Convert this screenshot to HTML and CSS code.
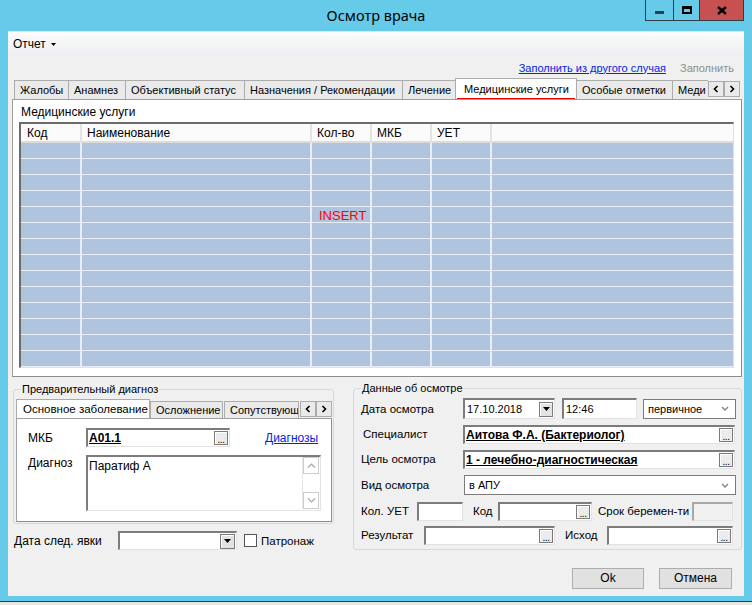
FILE: index.html
```html
<!DOCTYPE html>
<html lang="ru">
<head>
<meta charset="utf-8">
<title>Осмотр врача</title>
<link rel="stylesheet" href="styles.css">
</head>
<body>
<div class="window">
  <div class="titlebar">
    <div class="spacer"></div>
    <div class="title">Осмотр врача</div>
    <div class="caption">
      <div class="cbtn cmin"><span class="min-bar"></span></div>
      <div class="cbtn cmax"><span class="max-box"></span></div>
      <div class="cbtn cclose">
        <svg width="10" height="9" viewBox="0 0 10 9"><path d="M1 1 L9 8 M9 1 L1 8" stroke="#000" stroke-width="2.4" fill="none"/></svg>
      </div>
    </div>
  </div>

  <div class="client">
    <div class="menubar">
      <span class="menu-item">Отчет</span>
      <svg class="caret" width="5" height="3" viewBox="0 0 5 3"><path d="M0 0 H5 L2.5 3 Z" fill="#000"/></svg>
    </div>

    <div class="toolbar">
      <span class="link">Заполнить из другого случая</span>
      <span class="disabled">Заполнить</span>
    </div>

    <div class="tabstrip main-strip">
      <div class="tabs">
        <div class="tab t-zhal">Жалобы</div>
        <div class="tab t-anam">Анамнез</div>
        <div class="tab t-obj">Объективный статус</div>
        <div class="tab t-nazn">Назначения / Рекомендации</div>
        <div class="tab t-lech">Лечение</div>
        <div class="tab selected t-med">Медицинские услуги</div>
        <div class="tab t-osob">Особые отметки</div>
        <div class="tab t-medi">Меди</div>
      </div>
      <div class="sbtn"><svg width="6" height="8" viewBox="0 0 6 8"><polyline points="4.5,1 1.5,4 4.5,7" fill="none" stroke="#000" stroke-width="1.6"/></svg></div>
      <div class="sbtn"><svg width="6" height="8" viewBox="0 0 6 8"><polyline points="1.5,1 4.5,4 1.5,7" fill="none" stroke="#000" stroke-width="1.6"/></svg></div>
    </div>

    <div class="panel main-panel">
      <div class="panel-label">Медицинские услуги</div>
      <div class="grid">
        <table>
          <thead>
            <tr><th>Код</th><th>Наименование</th><th>Кол-во</th><th>МКБ</th><th>УЕТ</th><th></th></tr>
          </thead>
          <tbody>
            <tr><td></td><td></td><td></td><td></td><td></td><td></td></tr>
            <tr><td></td><td></td><td></td><td></td><td></td><td></td></tr>
            <tr><td></td><td></td><td></td><td></td><td></td><td></td></tr>
            <tr><td></td><td></td><td></td><td></td><td></td><td></td></tr>
            <tr><td></td><td></td><td></td><td></td><td></td><td></td></tr>
            <tr><td></td><td></td><td></td><td></td><td></td><td></td></tr>
            <tr><td></td><td></td><td></td><td></td><td></td><td></td></tr>
            <tr><td></td><td></td><td></td><td></td><td></td><td></td></tr>
            <tr><td></td><td></td><td></td><td></td><td></td><td></td></tr>
            <tr><td></td><td></td><td></td><td></td><td></td><td></td></tr>
            <tr><td></td><td></td><td></td><td></td><td></td><td></td></tr>
            <tr><td></td><td></td><td></td><td></td><td></td><td></td></tr>
            <tr><td></td><td></td><td></td><td></td><td></td><td></td></tr>
            <tr><td></td><td></td><td></td><td></td><td></td><td></td></tr>
          </tbody>
        </table>
        <div class="insert">INSERT</div>
      </div>
    </div>

    <div class="bottom">
      <div class="left-col">
        <fieldset class="group group-left">
          <legend>Предварительный диагноз</legend>
          <div class="tabstrip inner-strip">
            <div class="tabs">
              <div class="itab selected it-main">Основное заболевание</div>
              <div class="itab it-osl">Осложнение</div>
              <div class="itab it-sop">Сопутствующ</div>
            </div>
            <div class="sbtn isbtn"><svg width="6" height="8" viewBox="0 0 6 8"><polyline points="4.5,1 1.5,4 4.5,7" fill="none" stroke="#000" stroke-width="1.6"/></svg></div>
            <div class="sbtn isbtn"><svg width="6" height="8" viewBox="0 0 6 8"><polyline points="1.5,1 4.5,4 1.5,7" fill="none" stroke="#000" stroke-width="1.6"/></svg></div>
          </div>
          <div class="panel inner-panel">
            <div class="irow">
              <span class="ilabel">МКБ</span>
              <div class="field mkb">
                <span class="bold-val">A01.1</span>
                <span class="dots">...</span>
              </div>
              <span class="link diag-link">Диагнозы</span>
            </div>
            <div class="irow drow">
              <span class="ilabel dlabel">Диагноз</span>
              <div class="memo">
                <span class="memo-text">Паратиф А</span>
                <div class="vscroll">
                  <div class="varrow"><svg width="9" height="5" viewBox="0 0 9 5"><polyline points="1,4.5 4.5,1 8,4.5" fill="none" stroke="#a6a6a6" stroke-width="1.2"/></svg></div>
                  <div class="vtrack"></div>
                  <div class="varrow"><svg width="9" height="5" viewBox="0 0 9 5"><polyline points="1,0.5 4.5,4 8,0.5" fill="none" stroke="#a6a6a6" stroke-width="1.2"/></svg></div>
                </div>
              </div>
            </div>
          </div>
        </fieldset>
        <div class="date-row">
          <span class="date-label">Дата след. явки</span>
          <div class="field next-date">
            <span class="ddbtn"><svg width="7" height="4" viewBox="0 0 7 4"><path d="M0 0 H7 L3.5 4 Z" fill="#000"/></svg></span>
          </div>
          <span class="checkbox"></span>
          <span class="check-label">Патронаж</span>
        </div>
      </div>

      <div class="right-col">
        <fieldset class="group group-right">
          <legend>Данные об осмотре</legend>
          <div class="rrow r1">
            <span class="rlabel">Дата осмотра</span>
            <div class="field f-date"><span class="val">17.10.2018</span><span class="ddbtn small"><svg width="7" height="4" viewBox="0 0 7 4"><path d="M0 0 H7 L3.5 4 Z" fill="#000"/></svg></span></div>
            <div class="field f-time"><span class="val">12:46</span></div>
            <div class="combo f-kind"><span class="val">первичное</span><svg width="8" height="5" viewBox="0 0 8 5"><polyline points="1,1 4,4 7,1" fill="none" stroke="#8a8a8a" stroke-width="1.5"/></svg></div>
          </div>
          <div class="rrow r2">
            <span class="rlabel indent">Специалист</span>
            <div class="field f-wide"><span class="bold-val">Аитова Ф.А. (Бактериолог)</span><span class="dots">...</span></div>
          </div>
          <div class="rrow r3">
            <span class="rlabel">Цель осмотра</span>
            <div class="field f-wide"><span class="bold-val">1 - лечебно-диагностическая</span><span class="dots">...</span></div>
          </div>
          <div class="rrow r4">
            <span class="rlabel">Вид осмотра</span>
            <div class="combo f-wide"><span class="val">в АПУ</span><svg width="8" height="5" viewBox="0 0 8 5"><polyline points="1,1 4,4 7,1" fill="none" stroke="#8a8a8a" stroke-width="1.5"/></svg></div>
          </div>
          <div class="rrow r5">
            <span class="rlabel l-uet">Кол. УЕТ</span>
            <div class="field f-uet"></div>
            <span class="rlabel l-kod">Код</span>
            <div class="field f-kod"><span class="dots">...</span></div>
            <span class="rlabel l-srok">Срок беремен-ти</span>
            <div class="field f-srok disabled-field"></div>
          </div>
          <div class="rrow r6">
            <span class="rlabel l-res">Результат</span>
            <div class="field f-res"><span class="dots">...</span></div>
            <span class="rlabel l-ish">Исход</span>
            <div class="field f-ish"><span class="dots">...</span></div>
          </div>
        </fieldset>
        <div class="buttons">
          <div class="btn btn-ok">Ok</div>
          <div class="btn btn-cancel">Отмена</div>
        </div>
      </div>
    </div>
  </div>
</div>
</body>
</html>
```
FILE: styles.css
```css
* { box-sizing: border-box; }

body {
  margin: 0;
  background: #e6e6e6;
  font-family: "Liberation Sans", Arial, sans-serif;
  font-size: 12px;
  color: #000;
}

.window {
  width: 752px;
  height: 602px;
  background: #66cbe9;
  border-bottom: 1px solid #2d3a40;
  display: flex;
  flex-direction: column;
}

/* title bar */
.titlebar {
  height: 31px;
  flex: none;
  display: grid;
  grid-template-columns: 1fr auto 1fr;
}
.title {
  font-family: "Noto Sans", "Open Sans", sans-serif;
  font-size: 14.5px;
  line-height: 31px;
}
.caption {
  justify-self: end;
  align-self: start;
  display: flex;
  margin-right: 8px;
  height: 21px;
}
.cbtn {
  height: 21px;
  border: 1px solid #2e3d45;
  border-top: none;
  display: flex;
  align-items: center;
  justify-content: center;
}
.cmin { width: 29px; }
.cmax { width: 27px; margin-left: -1px; }
.cclose { width: 45px; margin-left: -1px; background: #c75050; }
.min-bar {
  width: 9px;
  height: 3px;
  background: #2b4052;
  margin-top: 5px;
}
.max-box {
  width: 10px;
  height: 8px;
  border: 2px solid #000;
  border-top-width: 3px;
}

/* client */
.client {
  margin: 0 8px;
  height: 565px;
  flex: none;
  background: #f0f0f0;
  display: flex;
  flex-direction: column;
}

.menubar {
  height: 24px;
  flex: none;
  display: flex;
  align-items: center;
  padding-left: 5px;
  background: linear-gradient(#fcfcfc, #eceef1);
  border-top: 1px solid #dfe6ea;
}
.menu-item { margin-right: 5px; }
.caret { margin-top: 1px; }

.toolbar {
  height: 23px;
  flex: none;
  display: flex;
  justify-content: flex-end;
  align-items: center;
  gap: 14px;
  padding-right: 10px;
  padding-top: 2px;
  font-size: 11px;
}
.link {
  color: #0026e8;
  text-decoration: underline;
}
.disabled { color: #8d8d8d; }

/* tabs */
.tabstrip {
  display: flex;
  align-items: flex-end;
  flex: none;
}
.tabs {
  flex: 1;
  display: flex;
  align-items: flex-end;
  overflow: hidden;
  height: 100%;
}
.main-strip {
  height: 21px;
  margin-left: 6px;
  width: 726px;
}
.tab {
  flex: none;
  height: 19px;
  margin-right: -1px;
  border: 1px solid #acacac;
  border-bottom: none;
  background: #eaeaea;
  padding-left: 5px;
  font-size: 11px;
  line-height: 18px;
  white-space: nowrap;
  overflow: hidden;
}
.tab.selected {
  position: relative;
  z-index: 2;
  height: 23px;
  margin-bottom: -2px;
  background: #fff;
  padding-left: 8px;
  line-height: 20px;
  overflow: visible;
}
.tab.selected::after {
  content: "";
  position: absolute;
  left: 1px;
  right: 1px;
  bottom: 0;
  height: 3px;
  background: #f00000;
}
.t-zhal { width: 55px; }
.t-anam { width: 58px; }
.t-obj { width: 120px; }
.t-nazn { width: 159px; }
.t-lech { width: 54px; }
.t-med { width: 122px; }
.t-osob { width: 97px; }
.t-medi { width: 40px; }

.sbtn {
  flex: none;
  align-self: flex-start;
  margin-top: 3px;
  width: 16px;
  height: 16px;
  border: 1px solid #acacac;
  background: #eaeaea;
  display: flex;
  align-items: center;
  justify-content: center;
}

.panel {
  background: #fff;
  border: 1px solid #a0a0a0;
  border-right-color: #8c8c8c;
  border-bottom-color: #8c8c8c;
}
.main-panel {
  margin-left: 4px;
  width: 730px;
  height: 278px;
  padding: 5px 0 0 6px;
  flex: none;
}
.panel-label {
  margin-left: 2px;
  line-height: 14px;
  margin-bottom: 3px;
  font-size: 12px;
}

/* grid */
.grid {
  position: relative;
  width: 715px;
  height: 246px;
  border-top: 2px solid #6b6b6b;
  border-left: 2px solid #6b6b6b;
  border-right: 1px solid #e0e0e0;
  border-bottom: 1px solid #e0e0e0;
  background: #fff;
}
.grid table {
  border-collapse: separate;
  border-spacing: 0;
  width: 712px;
  table-layout: fixed;
}
.grid th:nth-child(1), .grid td:nth-child(1) { width: 61px; }
.grid th:nth-child(2), .grid td:nth-child(2) { width: 230px; }
.grid th:nth-child(3), .grid td:nth-child(3) { width: 60px; }
.grid th:nth-child(4), .grid td:nth-child(4) { width: 60px; }
.grid th:nth-child(5), .grid td:nth-child(5) { width: 60px; }
.grid th {
  height: 19px;
  padding: 0 0 0 5px;
  text-align: left;
  font-weight: normal;
  font-size: 12px;
  background: #fbfbfb;
  border-right: 2px solid #e4e4e4;
  border-bottom: 2px solid #dcdcdc;
  line-height: 16px;
}
.grid th:first-child { padding-left: 6px; }
.grid th:last-child { border-right: none; }
.grid td {
  height: 16px;
  padding: 0;
  background: #b0c4de;
  border-right: 2px solid #e8eef6;
  border-bottom: 1px solid #e8eef6;
}
.grid td:last-child { border-right: none; }
.insert {
  position: absolute;
  left: 298px;
  top: 85px;
  color: #ff0000;
  font-size: 13px;
  line-height: 14px;
}

/* bottom */
.bottom {
  flex: none;
  display: flex;
  gap: 19px;
  padding-left: 5px;
  margin-top: 5px;
}
.left-col { width: 321px; }
.right-col { width: 389px; margin-top: -1px; }

.group {
  margin: 0;
  border: 1px solid #d6d9dc;
  border-radius: 3px;
  min-width: 0;
}
.group legend {
  padding: 0 1px;
  line-height: 14px;
  font-size: 11px;
}
.group-left {
  height: 142px;
  padding: 0 0 0 2px;
}
.group-left legend { margin-left: 5px; }

.inner-strip {
  height: 19px;
  margin-top: 3px;
  width: 316px;
}
.itab {
  flex: none;
  height: 17px;
  border: 1px solid #acacac;
  border-bottom: none;
  background: #eaeaea;
  padding-left: 5px;
  font-size: 11px;
  line-height: 16px;
  white-space: nowrap;
  overflow: hidden;
}
.itab.selected {
  position: relative;
  z-index: 2;
  height: 21px;
  margin-bottom: -2px;
  background: #fff;
  padding-left: 6px;
  line-height: 19px;
  font-size: 11.5px;
}
.it-main { width: 134px; }
.it-osl { width: 73px; }
.it-sop { width: 75px; margin-left: 1px; }
.isbtn { margin-top: 2px; width: 16px; }

.inner-panel {
  width: 316px;
  height: 104px;
  padding: 9px 0 0 11px;
}
.irow {
  display: flex;
  align-items: center;
  height: 19px;
}
.ilabel { width: 58px; flex: none; }
.field {
  position: relative;
  flex: none;
  height: 19px;
  background: #fff;
  border-top: 2px solid #7c7c7c;
  border-left: 2px solid #7c7c7c;
  border-right: 1px solid #e3e3e3;
  border-bottom: 1px solid #e3e3e3;
  display: flex;
  align-items: center;
  padding-left: 1px;
}
.bold-val {
  font-weight: bold;
  text-decoration: underline;
  flex: 1;
  white-space: nowrap;
  overflow: hidden;
}
.dots {
  flex: none;
  width: 14px;
  height: 14px;
  margin-right: 1px;
  border: 1px solid #7a7a7a;
  background: #ececec;
  box-shadow: inset 1px 1px 0 #fff;
  font-size: 10px;
  line-height: 15px;
  text-align: center;
  letter-spacing: -0.5px;
  margin-left: auto;
}
.mkb { width: 144px; }
.diag-link { margin-left: 35px; }
.drow {
  margin-top: 8px;
  height: 56px;
  align-items: flex-start;
}
.dlabel { padding-top: 1px; }
.memo {
  width: 235px;
  height: 56px;
  display: flex;
  background: #fff;
  border-top: 2px solid #7c7c7c;
  border-left: 2px solid #7c7c7c;
  border-right: 1px solid #e3e3e3;
  border-bottom: 1px solid #e3e3e3;
}
.memo-text {
  flex: 1;
  padding: 2px 0 0 1px;
  line-height: 14px;
}
.vscroll {
  width: 17px;
  display: flex;
  flex-direction: column;
  border-left: 1px solid #e6e6e6;
  margin: 0 1px 1px 0;
}
.varrow {
  height: 17px;
  border: 1px solid #cdcdcd;
  display: flex;
  align-items: center;
  justify-content: center;
  background: #fff;
}
.vtrack { flex: 1; }

.date-row {
  display: flex;
  align-items: center;
  height: 19px;
  margin-top: 7px;
  padding-left: 1px;
}
.date-label { width: 104px; flex: none; }
.next-date { width: 119px; justify-content: flex-end; }
.ddbtn {
  width: 15px;
  height: 15px;
  margin-right: 1px;
  border: 1px solid #7a7a7a;
  background: #e3e3e3;
  box-shadow: inset 1px 1px 0 #fff;
  display: flex;
  align-items: center;
  justify-content: center;
}
.checkbox {
  width: 13px;
  height: 13px;
  margin-left: 7px;
  border: 1px solid #555;
  background: #fff;
  flex: none;
}
.check-label { margin-left: 4px; font-size: 11.5px; }

/* right group */
.group-right {
  height: 169px;
  padding: 0 0 0 7px;
}
.group-right legend { margin-left: 0; }
.rrow {
  display: flex;
  align-items: center;
  height: 20px;
}
.r1 { margin-top: 3px; height: 21px; }
.r2 { margin-top: 5px; }
.r3 { margin-top: 5px; }
.r4 { margin-top: 6px; }
.r5 { margin-top: 6px; }
.r6 { margin-top: 4px; }
.rlabel { flex: none; width: 102px; white-space: nowrap; font-size: 11.5px; }
.rlabel.indent { padding-left: 2px; }
.val { flex: 1; white-space: nowrap; padding-left: 1px; font-size: 11px; }
.f-date { width: 92px; height: 21px; }
.ddbtn.small { width: 14px; height: 15px; margin-right: 1px; }
.f-time { width: 75px; height: 21px; margin-left: 7px; }
.combo {
  flex: none;
  height: 20px;
  border: 1px solid #7a7a7a;
  background: #fff;
  display: flex;
  align-items: center;
  padding: 0 6px 0 3px;
}
.f-kind { width: 93px; margin-left: 6px; }
.f-wide { width: 272px; }
.combo.f-wide { margin-left: 1px; }
.l-uet { width: 56px; }
.f-uet { width: 46px; }
.l-kod { width: 25px; margin-left: 10px; }
.f-kod { width: 94px; }
.l-srok { width: 94px; margin-left: 6px; }
.f-srok { width: 41px; }
.disabled-field { background: #f0f0f0; border-top-color: #a8a8a8; border-left-color: #a8a8a8; }
.l-res { width: 63px; }
.f-res { width: 131px; }
.l-ish { width: 42px; margin-left: 10px; }
.f-ish { width: 126px; }

.buttons {
  display: flex;
  justify-content: flex-end;
  gap: 15px;
  padding-right: 10px;
  margin-top: 18px;
}
.btn {
  height: 21px;
  border: 1px solid #adadad;
  background: #e1e1e1;
  text-align: center;
  line-height: 19px;
}
.btn-ok { width: 72px; }
.btn-cancel { width: 73px; }
```
